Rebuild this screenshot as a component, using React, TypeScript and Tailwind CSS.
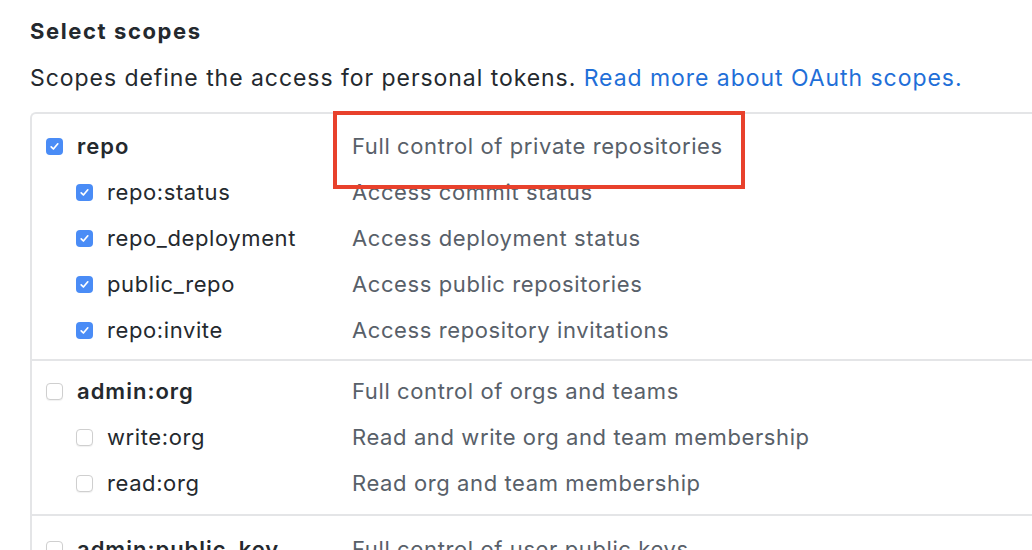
import React from "react";

type Row = { name: string; desc: string; checked: boolean; parent?: boolean };

const sections: { pad: string; rows: Row[] }[] = [
  {
    pad: "pt-[9px] pb-[6px]",
    rows: [
      { name: "repo", desc: "Full control of private repositories", checked: true, parent: true },
      { name: "repo:status", desc: "Access commit status", checked: true },
      { name: "repo_deployment", desc: "Access deployment status", checked: true },
      { name: "public_repo", desc: "Access public repositories", checked: true },
      { name: "repo:invite", desc: "Access repository invitations", checked: true },
    ],
  },
  {
    pad: "pt-[7px] pb-[8px]",
    rows: [
      { name: "admin:org", desc: "Full control of orgs and teams", checked: false, parent: true },
      { name: "write:org", desc: "Read and write org and team membership", checked: false },
      { name: "read:org", desc: "Read org and team membership", checked: false },
    ],
  },
  {
    pad: "pt-[10px] pb-[8px]",
    rows: [
      { name: "admin:public_key", desc: "Full control of user public keys", checked: false, parent: true },
    ],
  },
];

function Box({ checked }: { checked: boolean }) {
  if (checked) {
    return (
      <span className="w-[17px] h-[17px] rounded-[4px] bg-[#4a8cf6] flex items-center justify-center shrink-0">
        <svg width="11" height="11" viewBox="0 0 11 11" fill="none">
          <path d="M2.2 5.8 L4.4 8 L8.8 2.8" stroke="white" strokeWidth="1.7" strokeLinecap="round" strokeLinejoin="round" />
        </svg>
      </span>
    );
  }
  return (
    <span className="w-[17px] h-[17px] rounded-[4px] bg-white border border-[#cfcfcf] shadow-[0_1px_1px_rgba(0,0,0,0.06)] shrink-0" />
  );
}

export default function App() {
  return (
    <div
      className="relative w-[1032px] h-[550px] overflow-hidden bg-white pl-[30px] text-[#24292e]"
      style={{ fontFamily: "Inter, 'Noto Sans', sans-serif" }}
    >
      <h2 className="pt-[16px] text-[22px] leading-[30px] font-bold tracking-[1.6px]">Select scopes</h2>
      <p className="mt-[17px] text-[23px] leading-[30px] tracking-[0.95px] whitespace-nowrap">
        Scopes define the access for personal tokens.{" "}
        <span className="text-[#1f6fd8]">Read more about OAuth scopes.</span>
      </p>
      <div className="mt-[19px] border-l-2 border-t-2 border-[#e4e5e7] rounded-tl-[6px]">
        {sections.map((sec, i) => (
          <div key={i} className={`${sec.pad} border-b-2 border-[#e4e5e7]`}>
            {sec.rows.map((r) => (
              <div key={r.name} className="flex items-center h-[46px] text-[22px] whitespace-nowrap">
                <div className={`flex items-center w-[320px] shrink-0 ${r.parent ? "pl-[14px]" : "pl-[44px]"}`}>
                  <Box checked={r.checked} />
                  <span className={`ml-[14px] ${r.parent ? "font-semibold tracking-[1px]" : "tracking-[0.6px]"}`}>{r.name}</span>
                </div>
                <span className="text-[#586069] tracking-[0.6px]">{r.desc}</span>
              </div>
            ))}
          </div>
        ))}
      </div>
      <div className="absolute left-[333px] top-[111px] w-[412px] h-[78px] border-4 border-[#e8412c]" />
    </div>
  );
}
